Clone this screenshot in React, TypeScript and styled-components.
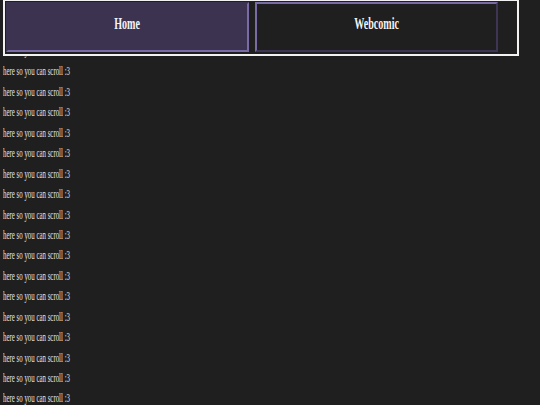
import React from "react";
import styled, { createGlobalStyle } from "styled-components";

const GlobalStyle = createGlobalStyle`
  html, body {
    margin: 0;
    padding: 0;
    background: #1f1f1f;
  }
  body {
    font-family: "Liberation Serif", "Times New Roman", serif;
    color: #e2e2e2;
    overflow: hidden;
  }
`;

const LINES = 18;

const App = () => {
  return (
    <>
      <GlobalStyle />
      <Nav>
        <NavButton active>
          <NavLabel>Home</NavLabel>
        </NavButton>
        <NavButton>
          <NavLabel>Webcomic</NavLabel>
        </NavButton>
      </Nav>
      <Content>
        {Array.from({ length: LINES }).map((_, i) => (
          <Line key={i}>
            <LineText>here so you can scroll :3</LineText>
          </Line>
        ))}
      </Content>
    </>
  );
};

const Nav = styled.nav`
  position: fixed;
  top: 0;
  left: 3px;
  width: 511px;
  height: 52px;
  border: 2px solid #f2f2f2;
  border-top-width: 1px;
  background: #1f1f1f;
  display: flex;
  gap: 6px;
  padding: 1px 0 0 1px;
  box-sizing: content-box;
  z-index: 10;
`;

const NavButton = styled.div<{ active?: boolean }>`
  width: 243px;
  height: 50px;
  box-sizing: border-box;
  display: flex;
  align-items: center;
  justify-content: center;
  border: 2px solid;
  background: ${(p) => (p.active ? "#3b3350" : "#1f1f1f")};
  border-color: ${(p) =>
    p.active
      ? "#3b3350 #7a6aa6 #7a6aa6 #3b3350"
      : "#7a6aa6 #3d3553 #3d3553 #7a6aa6"};
`;

const NavLabel = styled.span`
  display: inline-block;
  font-weight: bold;
  font-size: 16.5px;
  color: #f4f4f4;
  transform: scaleX(0.61);
  margin-top: -6px;
`;

const Content = styled.div`
  padding: 40px 3px 0;
`;

const Line = styled.p`
  margin: 0;
  height: 20.45px;
  line-height: 20.45px;
  white-space: nowrap;
`;

const LineText = styled.span`
  display: inline-block;
  font-size: 12.5px;
  transform: scaleX(0.55);
  transform-origin: left center;
`;

export default App;
